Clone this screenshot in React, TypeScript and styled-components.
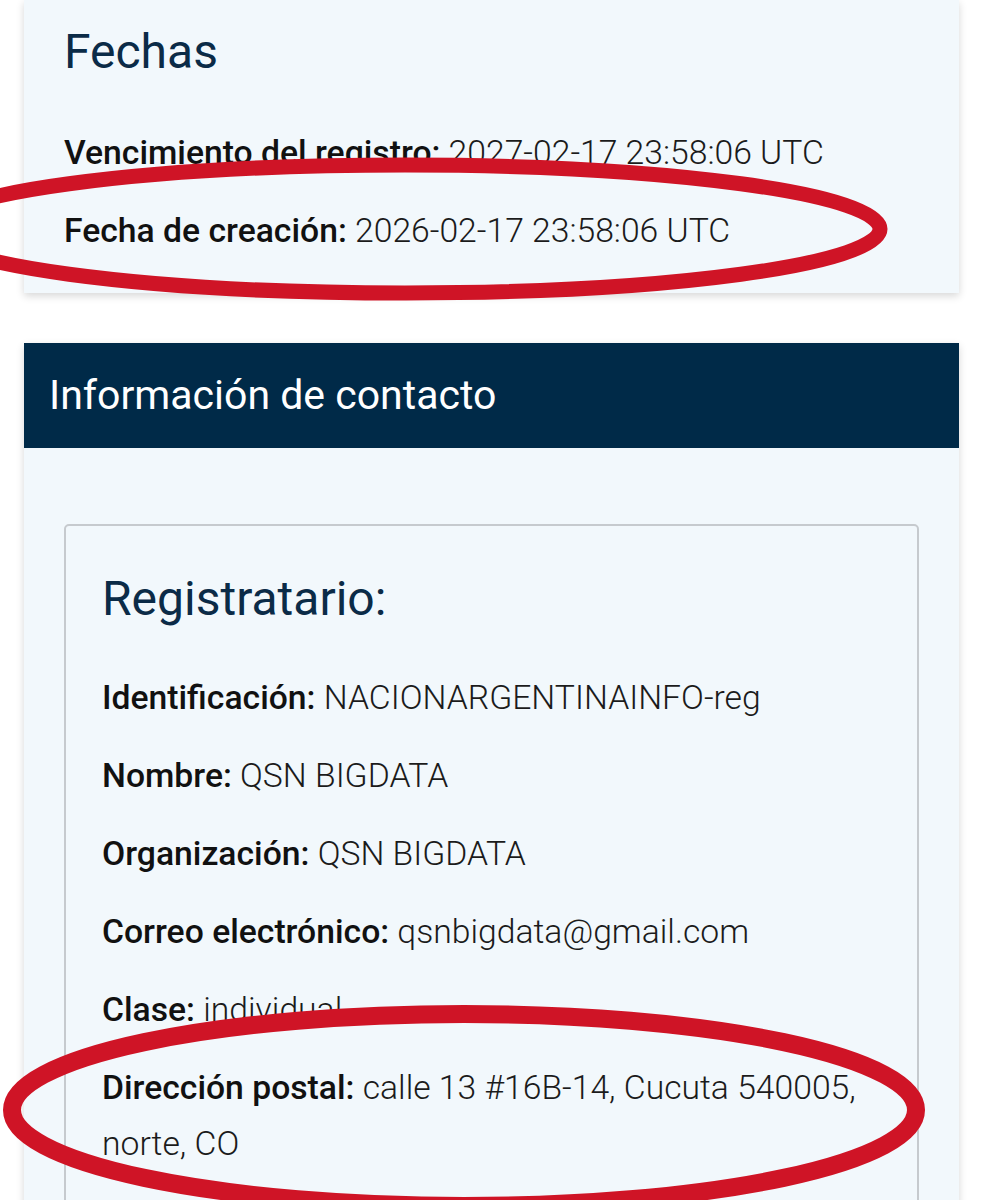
import styled, { createGlobalStyle } from "styled-components";

const GlobalStyle = createGlobalStyle`
  html, body {
    margin: 0;
    padding: 0;
    background: #ffffff;
  }
  body {
    font-family: Roboto, "Noto Sans", "Liberation Sans", sans-serif;
    color: #1b1b1b;
  }
`;

const Page = styled.div`
  position: relative;
  width: 983px;
  height: 1200px;
  overflow: hidden;
  padding: 0 24px;
  box-sizing: border-box;
  display: flex;
  flex-direction: column;
  gap: 50px;
`;

const Card = styled.section`
  background: #f2f8fc;
  box-shadow: 0 3px 8px rgba(0, 0, 0, 0.16);
`;

const DatesCard = styled(Card)`
  padding: 23px 40px 34px;
`;

const SectionTitle = styled.h2`
  margin: 0 0 44px;
  font-size: 48px;
  line-height: 1.2;
  font-weight: 400;
  color: #0b2b47;
`;

const Rows = styled.div`
  display: flex;
  flex-direction: column;
  gap: 22px;
`;

const Row = styled.p`
  margin: 0;
  font-size: 33.7px;
  line-height: 56px;
  font-weight: 300;
  color: #1b1b1b;
`;

const Label = styled.span`
  font-weight: 500;
  color: #111;
`;

const Band = styled.header`
  height: 105px;
  display: flex;
  align-items: center;
  padding: 0 25px;
  background: #002a48;
  color: #ffffff;
  font-size: 41px;
  font-weight: 400;
`;

const CardBody = styled.div`
  padding: 76px 40px 40px;
`;

const ContactBox = styled.div`
  border: 2px solid #c6cace;
  border-radius: 5px;
  padding: 44px 36px 40px;
`;

const ContactTitle = styled(SectionTitle)`
  margin-bottom: 43px;
`;

const Marks = styled.svg`
  position: absolute;
  top: 0;
  left: 0;
  pointer-events: none;
`;

const dates = [
  { label: "Vencimiento del registro:", value: "2027-02-17 23:58:06 UTC" },
  { label: "Fecha de creación:", value: "2026-02-17 23:58:06 UTC" },
];

const registrant = [
  { label: "Identificación:", value: "NACIONARGENTINAINFO-reg" },
  { label: "Nombre:", value: "QSN BIGDATA" },
  { label: "Organización:", value: "QSN BIGDATA" },
  { label: "Correo electrónico:", value: "qsnbigdata@gmail.com" },
  { label: "Clase:", value: "individual" },
  { label: "Dirección postal:", value: "calle 13 #16B-14, Cucuta 540005, norte, CO" },
];

export default function App() {
  return (
    <>
      <GlobalStyle />
      <Page>
        <DatesCard>
          <SectionTitle>Fechas</SectionTitle>
          <Rows>
            {dates.map(d => (
              <Row key={d.label}>
                <Label>{d.label}</Label> {d.value}
              </Row>
            ))}
          </Rows>
        </DatesCard>

        <Card>
          <Band>Información de contacto</Band>
          <CardBody>
            <ContactBox>
              <ContactTitle as="h3">Registratario:</ContactTitle>
              <Rows>
                {registrant.map(r => (
                  <Row key={r.label}>
                    <Label>{r.label}</Label> {r.value}
                  </Row>
                ))}
              </Rows>
            </ContactBox>
          </CardBody>
        </Card>

        {/* hand-drawn red annotation rings over the content */}
        <Marks width="983" height="1200" viewBox="0 0 983 1200">
          <ellipse cx="405" cy="229" rx="475" ry="64" fill="none" stroke="#cf1426" strokeWidth="15" />
          <ellipse cx="464" cy="1110" rx="452" ry="96" fill="none" stroke="#cf1426" strokeWidth="18" />
        </Marks>
      </Page>
    </>
  );
}
